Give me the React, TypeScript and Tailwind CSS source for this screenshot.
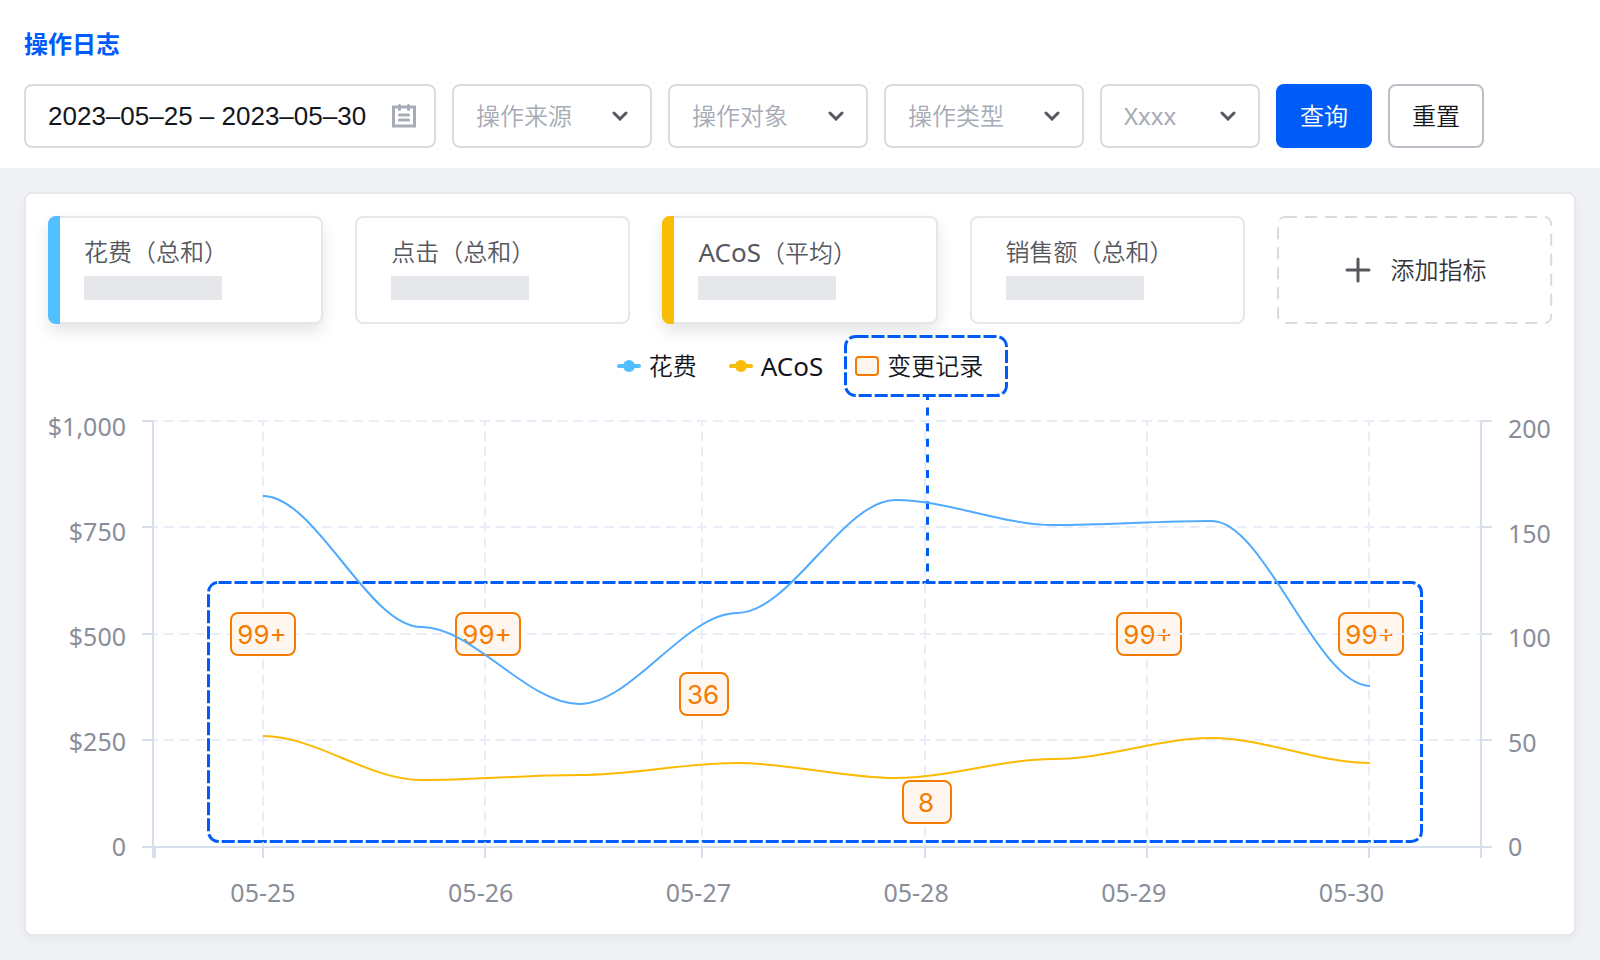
import { useState } from 'react';

interface FilterItem {
  label: string;
  className: string;
}

interface Metric {
  name: string;
  unit: string;
  nameClassName?: string;
  accent?: string;
}

interface ChangeBadge {
  x: number;
  y: number;
  width: number;
  text: string;
  gridTo?: number;
}

const filterList: FilterItem[] = [
  { label: '操作来源', className: 'w-[200px] font-[350]' },
  { label: '操作对象', className: 'w-[200px] font-[350]' },
  { label: '操作类型', className: 'w-[200px] font-[350]' },
  { label: 'Xxxx', className: 'w-[160px] font-normal' },
];

const metricList: Metric[] = [
  { name: '花费', unit: '（总和）', accent: 'bg-[#52bfff]' },
  { name: '点击', unit: '（总和）' },
  {
    name: 'ACoS',
    unit: '（平均）',
    nameClassName: 'text-[26px] font-normal',
    accent: 'bg-[#f9bc07]',
  },
  { name: '销售额', unit: '（总和）' },
];

const gridX = [105, 215, 437, 654, 877, 1099, 1321, 1433];
const gridY = [24, 130, 237, 343, 450];

const leftLabels = ['$1,000', '$750', '$500', '$250', '0'];
const rightLabels = ['200', '150', '100', '50', '0'];
const dateLabels = ['05-25', '05-26', '05-27', '05-28', '05-29', '05-30'];

const costValues = [99, 230, 307, 216, 103, 128, 124, 289];
const acosValues = [339, 383, 378, 366, 381, 362, 341, 366];

const badgeList: ChangeBadge[] = [
  { x: 182, y: 215, width: 66, text: '99+' },
  { x: 407, y: 215, width: 66, text: '99+' },
  { x: 631, y: 275, width: 50, text: '36' },
  { x: 854, y: 383, width: 50, text: '8' },
  { x: 1068, y: 215, width: 66, text: '99+', gridTo: 1321 },
  { x: 1290, y: 215, width: 66, text: '99+', gridTo: 1433 },
];

// smooth curve with a flat tangent at every point
const toPath = (values: number[]) => {
  const step = (1322 - 215) / (values.length - 1);
  return values.reduce((path, y, i) => {
    const x = 215 + step * i;
    if (i === 0) return `M${x} ${y}`;
    const prev = values[i - 1];
    return `${path} C${x - (step * 2) / 3} ${prev} ${x - step / 3} ${y} ${x} ${y}`;
  }, '');
};

const GridLine = ({
  x1,
  y1,
  x2,
  y2,
}: {
  x1: number;
  y1: number;
  x2: number;
  y2: number;
}) => {
  const count = Math.round((x2 - x1 + y2 - y1) / 15.6);
  return (
    <line
      x1={x1}
      y1={y1}
      x2={x2}
      y2={y2}
      pathLength={count * 16}
      stroke="#e9edf8"
      strokeWidth="2"
      strokeDasharray="10 6"
      strokeDashoffset="5"
    />
  );
};

const CalendarIcon = () => (
  <svg width="24" height="24" viewBox="0 0 24 24" fill="none" stroke="#a6abb5">
    <rect x="1.5" y="3" width="21" height="19" strokeWidth="3" />
    <path
      d="M7.5 1.5v4M16.5 1.5v4M7.5 11h9M7.5 16h9"
      strokeWidth="3"
      strokeLinecap="round"
    />
  </svg>
);

const ChevronIcon = () => (
  <svg
    className="pointer-events-none absolute top-1/2 right-6 -translate-y-1/2"
    width="16"
    height="10"
    viewBox="0 0 16 10"
    fill="none"
    stroke="#56585f"
    strokeWidth="3"
    strokeLinecap="round"
  >
    <path d="M2 2l6 6 6-6" />
  </svg>
);

const FilterSelect = ({ item }: { item: FilterItem }) => (
  <div className={`relative ${item.className}`}>
    <select
      aria-label={item.label}
      className="h-16 w-full appearance-none rounded-lg border-2 border-[#dadbe0] bg-white pr-12 pl-[22px] text-2xl text-[#a6abb5]"
    >
      <option>{item.label}</option>
    </select>
    <ChevronIcon />
  </div>
);

const MetricCard = ({ metric }: { metric: Metric }) => (
  <div
    className={`relative h-[108px] rounded-lg border-2 border-[#e6e7eb] bg-white pt-[22px] pl-[34px] ${
      metric.accent ? 'shadow-[0_8px_16px_rgba(0,0,0,0.1)]' : ''
    }`}
  >
    {metric.accent && (
      <span
        className={`absolute -inset-y-0.5 -left-0.5 w-3 rounded-l-lg ${metric.accent}`}
      />
    )}
    <p className="h-6 text-2xl leading-6 font-[350] whitespace-nowrap text-[#56585f]">
      <span className={metric.nameClassName}>{metric.name}</span>
      {metric.unit}
    </p>
    <div className="mt-3 h-6 w-[138px] bg-[#e6e7eb]" />
  </div>
);

const LegendMarker = ({ color }: { color: string }) => (
  <svg width="24" height="12" viewBox="0 0 24 12" fill={color}>
    <rect y="4" width="24" height="4" rx="2" />
    <circle cx="12" cy="6" r="6" />
  </svg>
);

const Legend = () => (
  <div className="mt-[11px] flex h-[62px] items-center justify-center gap-8 text-2xl font-[350] text-[#14161c]">
    <div className="flex items-center gap-2">
      <LegendMarker color="#52bfff" />
      <span>花费</span>
    </div>
    <div className="flex items-center gap-2">
      <LegendMarker color="#f9bc07" />
      <span className="text-[26px] font-normal">ACoS</span>
    </div>
    <div className="relative flex h-full items-center gap-2">
      <svg className="absolute top-0 -left-[11px] h-full w-[164px]" fill="none">
        <rect
          x="1.5"
          y="1.5"
          width="161"
          height="59"
          rx="10"
          stroke="#005cf7"
          strokeWidth="3"
          strokeDasharray="13 3"
        />
      </svg>
      <span className="h-5 w-6 rounded-sm border-2 border-[#f57c00] bg-[#fff6f0]" />
      <span>变更记录</span>
    </div>
  </div>
);

const Chart = () => (
  <svg
    className="block w-full font-['Noto_Sans','Noto_Sans_CJK_SC',sans-serif]"
    viewBox="0 0 1504 515"
    fill="none"
  >
    {gridY.slice(0, 4).map((y) =>
      gridX
        .slice(1)
        .map((x, i) => (
          <GridLine key={`${x}-${y}`} x1={gridX[i]} y1={y} x2={x} y2={y} />
        )),
    )}

    {/* highlighted area */}
    <path
      d="M879.5 0V185"
      stroke="#005cf7"
      strokeWidth="3"
      strokeDasharray="8 7.6"
      strokeDashoffset="5"
    />
    <rect
      x="160.5"
      y="185.5"
      width="1213"
      height="259"
      rx="10"
      stroke="#005cf7"
      strokeWidth="3"
      strokeDasharray="13 3"
    />

    {gridX.slice(1, 7).map((x) =>
      gridY
        .slice(1)
        .map((y, i) => (
          <GridLine key={`${x}-${y}`} x1={x} y1={gridY[i]} x2={x} y2={y} />
        )),
    )}

    {/* axes */}
    <g stroke="#d8deeb" strokeWidth="2">
      <path d="M105 24V450M1433 24V461M94 450H1444" />
      <path d="M106 450V461" strokeWidth="4" />
      {gridY.slice(0, 4).map((y) => (
        <path key={y} d={`M94 ${y}H105M1433 ${y}H1444`} />
      ))}
      {gridX.slice(1, 7).map((x) => (
        <path key={x} d={`M${x} 450V461`} />
      ))}
    </g>

    {badgeList.map((badge) => (
      <g key={badge.x}>
        <rect
          x={badge.x + 1}
          y={badge.y + 1}
          width={badge.width - 2}
          height="42"
          rx="7"
          fill="#fff6f0"
          stroke="#f57c00"
          strokeWidth="2"
        />
        <text
          className="font-['Inter',sans-serif] text-[26px] font-normal"
          x={badge.x + badge.width / 2 - 1}
          y={badge.y + 32}
          textAnchor="middle"
          fill="#f57c00"
        >
          {badge.text}
        </text>
        {badge.gridTo && (
          <GridLine x1={badge.x + 31} y1={237} x2={badge.gridTo} y2={237} />
        )}
      </g>
    ))}

    <path d={toPath(acosValues)} stroke="#fcba03" strokeWidth="2" />
    <path d={toPath(costValues)} stroke="#50abff" strokeWidth="2" />

    <g className="text-[25px]" fill="#898e99">
      {leftLabels.map((label, i) => (
        <text key={label} x="78" y={39 + i * 105} textAnchor="end">
          {label}
        </text>
      ))}
      {rightLabels.map((label, i) => (
        <text key={label} x="1460" y={41 + i * 104.5}>
          {label}
        </text>
      ))}
      {dateLabels.map((label, i) => (
        <text key={label} x={215 + i * 217.7} y="505" textAnchor="middle">
          {label}
        </text>
      ))}
    </g>
  </svg>
);

const App = () => {
  const [dateRange, setDateRange] = useState('2023–05–25 – 2023–05–30');

  return (
    <div className="min-h-screen bg-[#f0f1f5] pb-6 font-['Noto_Sans','Noto_Sans_CJK_SC',sans-serif]">
      <header className="bg-white px-6 pt-8 pb-5">
        <h1 className="text-2xl leading-6 font-bold text-[#005cf7]">操作日志</h1>
        <form className="mt-7 flex flex-wrap gap-4">
          <div className="relative w-[412px]">
            <input
              type="text"
              aria-label="日期"
              value={dateRange}
              onChange={(e) => setDateRange(e.target.value)}
              className="h-16 w-full rounded-lg border-2 border-[#dadbe0] bg-white pr-14 pl-[22px] font-['Liberation_Sans',sans-serif] text-[26px] text-[#14161c]"
            />
            <span className="absolute top-5 right-5">
              <CalendarIcon />
            </span>
          </div>
          {filterList.map((item) => (
            <FilterSelect key={item.label} item={item} />
          ))}
          <button
            type="button"
            className="h-16 w-24 rounded-lg bg-[#005cf7] text-2xl font-[350] text-white"
          >
            查询
          </button>
          <button
            type="button"
            className="h-16 w-24 rounded-lg border-2 border-[#bbbfc6] bg-white text-2xl font-[350] text-[#14161c]"
          >
            重置
          </button>
        </form>
      </header>

      <main className="mx-6 mt-6 rounded-lg border-2 border-[#e6e7eb] bg-white p-[22px] shadow-[0_4px_8px_rgba(0,0,0,0.04)]">
        <div className="grid grid-cols-5 gap-8">
          {metricList.map((metric) => (
            <MetricCard key={metric.name} metric={metric} />
          ))}
          <button
            type="button"
            className="relative flex h-[108px] items-center justify-center gap-4 text-2xl font-[350] text-[#33353b]"
          >
            <svg className="absolute inset-0 h-full w-full overflow-visible p-px" fill="none">
              <rect
                width="100%"
                height="100%"
                rx="7"
                stroke="#d9dadd"
                strokeWidth="2"
                strokeDasharray="12 8"
              />
            </svg>
            <svg
              width="32"
              height="32"
              viewBox="0 0 32 32"
              stroke="#56585f"
              strokeWidth="3"
              strokeLinecap="round"
            >
              <path d="M16 5v22M5 16h22" />
            </svg>
            添加指标
          </button>
        </div>
        <Legend />
        <Chart />
      </main>
    </div>
  );
};

export default App;
